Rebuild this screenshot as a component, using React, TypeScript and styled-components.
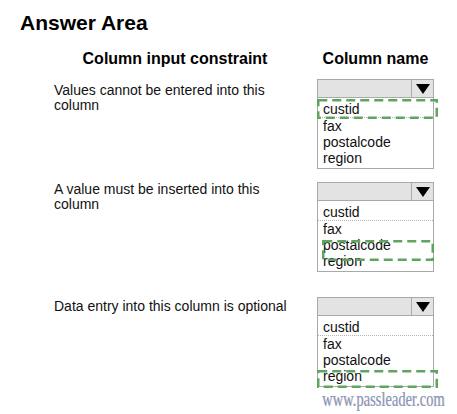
import styled, { createGlobalStyle } from "styled-components";

const GlobalStyle = createGlobalStyle`
  body {
    margin: 0;
    background: #fff;
    font-family: "Liberation Sans", Arial, sans-serif;
    color: #111;
  }
`;

const Page = styled.div`
  width: 457px;
  height: 414px;
  overflow: hidden;
  padding-top: 11px;
  box-sizing: border-box;
`;

const Title = styled.h1`
  margin: 0 0 0 20px;
  font-size: 21px;
  line-height: 24px;
  font-weight: 700;
  color: #000;
`;

const HeaderRow = styled.div`
  display: flex;
  gap: 21px;
  margin: 15px 0 0 54px;
`;

const HeaderCell = styled.div<{ $w: number }>`
  width: ${(p) => p.$w}px;
  text-align: center;
  font-size: 16px;
  line-height: 18px;
  font-weight: 700;
  color: #000;
  white-space: nowrap;
`;

const Row = styled.div<{ $top: number }>`
  display: flex;
  gap: 21px;
  margin: ${(p) => p.$top}px 0 0 54px;
`;

const Label = styled.div<{ $offset: number }>`
  width: 242px;
  padding-top: ${(p) => p.$offset}px;
  padding-right: 6px;
  box-sizing: border-box;
  font-size: 14px;
  line-height: 15px;
  color: #111;
`;

const Dropdown = styled.div`
  position: relative;
  width: 117px;
`;

const Head = styled.div`
  display: flex;
  height: 19px;
  box-sizing: border-box;
  border: 1px solid #a9a9a9;
  background: #e3e3e3;
`;

const Field = styled.div`
  flex: 1;
`;

const ArrowButton = styled.div`
  width: 21px;
  border-left: 1px solid #a9a9a9;
  display: flex;
  align-items: center;
  justify-content: center;

  &::after {
    content: "";
    border-left: 7px solid transparent;
    border-right: 7px solid transparent;
    border-top: 10px solid #000;
  }
`;

const List = styled.ul`
  margin: 0;
  padding: 4px 0 2px;
  list-style: none;
  border: 1px solid #a9a9a9;
  border-top: none;
  background: #fff;
`;

const Item = styled.li<{ $divider?: boolean }>`
  padding-left: 5px;
  font-size: 14px;
  line-height: ${(p) => (p.$divider ? 15 : 16)}px;
  color: #111;
  border-bottom: ${(p) => (p.$divider ? "1px dotted #b5b5b5" : "none")};
`;

const Highlight = styled.svg`
  position: absolute;
  overflow: visible;
  pointer-events: none;
`;

const Footer = styled.div`
  display: flex;
  justify-content: flex-end;
  padding-right: 12px;
  margin-top: 0;
`;

const Watermark = styled.span`
  display: inline-block;
  font-family: "Liberation Serif", "Times New Roman", serif;
  font-size: 22px;
  line-height: 23px;
  color: #8797c4;
  transform: scaleX(0.66);
  transform-origin: right center;
  text-shadow: 1px 0 0 rgba(196, 170, 120, 0.55);
`;

type Box = { x: number; y: number; w: number; h: number };

const options = ["custid", "fax", "postalcode", "region"];

const questions: { text: string; top: number; offset: number; box: Box }[] = [
  {
    text: "Values cannot be entered into this column",
    top: 11,
    offset: 4,
    box: { x: 0, y: 20, w: 121, h: 20 },
  },
  {
    text: "A value must be inserted into this column",
    top: 13,
    offset: 0,
    box: { x: 5, y: 58, w: 112, h: 21 },
  },
  {
    text: "Data entry into this column is optional",
    top: 25,
    offset: 2,
    box: { x: 0, y: 73, w: 121, h: 18 },
  },
];

function Select({ box }: { box: Box }) {
  return (
    <Dropdown>
      <Head>
        <Field />
        <ArrowButton />
      </Head>
      <List>
        {options.map((o, i) => (
          <Item key={o} $divider={i === 0}>
            {o}
          </Item>
        ))}
      </List>
      <Highlight
        style={{ left: box.x, top: box.y }}
        width={box.w}
        height={box.h}
        viewBox={`0 0 ${box.w} ${box.h}`}
      >
        <rect
          x="1.25"
          y="1.25"
          width={box.w - 2.5}
          height={box.h - 2.5}
          fill="none"
          stroke="#5ea65e"
          strokeWidth="2.5"
          strokeDasharray="9 5"
        />
      </Highlight>
    </Dropdown>
  );
}

export default function App() {
  return (
    <>
      <GlobalStyle />
      <Page>
        <Title>Answer Area</Title>
        <HeaderRow>
          <HeaderCell $w={242}>Column input constraint</HeaderCell>
          <HeaderCell $w={117}>Column name</HeaderCell>
        </HeaderRow>
        {questions.map((q) => (
          <Row key={q.text} $top={q.top}>
            <Label $offset={q.offset}>{q.text}</Label>
            <Select box={q.box} />
          </Row>
        ))}
        <Footer>
          <Watermark>www.passleader.com</Watermark>
        </Footer>
      </Page>
    </>
  );
}
